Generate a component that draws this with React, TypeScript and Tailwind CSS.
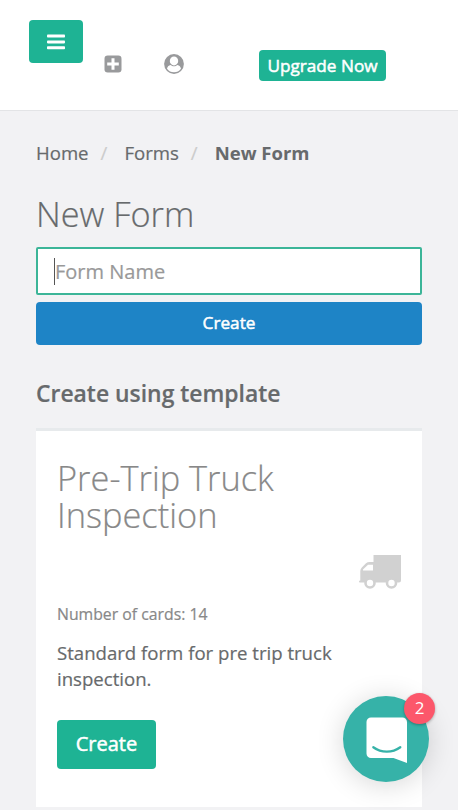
function BarsIcon() {
  return (
    <svg width="18" height="16" viewBox="0 0 18 16" fill="white">
      <rect x="0" y="0.5" width="18" height="3" rx="0.8" />
      <rect x="0" y="6.4" width="18" height="3" rx="0.8" />
      <rect x="0" y="12.3" width="18" height="3" rx="0.8" />
    </svg>
  );
}

function PlusSquareIcon() {
  return (
    <svg width="18" height="18" viewBox="0 0 18 18">
      <rect x="0.5" y="0.5" width="17" height="17" rx="3.2" fill="#999a9c" />
      <path d="M7.5 3.2h3v4.300h4.300v3h-4.300v4.300h-3v-4.300H3.200v-3h4.300z" fill="white" />
    </svg>
  );
}

function UserCircleIcon() {
  return (
    <svg width="20" height="20" viewBox="0 0 20 20">
      <circle cx="10" cy="10" r="9.9" fill="#999a9c" />
      <path
        d="M6.7 10.9C4.5 11.2 3.3 12.7 3 14.7c1.6 2.3 4.1 3.6 7 3.6s5.4-1.3 7-3.600c-.3-2-1.500-3.500-3.700-3.800-.9.900-2 1.400-3.300 1.400s-2.400-.5-3.300-1.400z"
        fill="white"
      />
      <ellipse cx="10" cy="6.9" rx="4.2" ry="4.5" fill="white" />
    </svg>
  );
}

function TruckIcon() {
  return (
    <svg width="42" height="34" viewBox="0 0 42 34">
      <path
        d="M14.5 0H42V25.500Q42 27.500 40 27.500H0.800Q0 27.500 0 26.500T1.300 25.500V16Q1.300 14 2.800 12.500L7 8.300Q8.500 7 10.500 7H14.500z"
        fill="#d1d1d1"
      />
      <path d="M4 15.500v-1L9 9.700h5v5.800z" fill="white" />
      <circle cx="11" cy="28" r="4.500" fill="white" stroke="#d1d1d1" strokeWidth="2.600" />
      <circle cx="32.500" cy="28" r="4.500" fill="white" stroke="#d1d1d1" strokeWidth="2.600" />
    </svg>
  );
}

function ChatIcon() {
  return (
    <svg width="42" height="47" viewBox="0 0 42 47" fill="none">
      <path
        d="M5 .5h31.500a4.500 4.500 0 0 1 4.500 4.500v41L27.500 41H5A4.500 4.500 0 0 1 .5 36.500V5A4.500 4.500 0 0 1 5 .5z"
        fill="white"
      />
      <path d="M7.300 30.200c8 5.900 19 5.900 27 0" stroke="#36b2a8" strokeWidth="2.300" strokeLinecap="round" />
    </svg>
  );
}

export default function App() {
  return (
    <div className="relative h-[810px] w-full overflow-hidden bg-[#f2f2f4] font-['Open_Sans',sans-serif] text-[18.6px] text-[#676a6c] [-webkit-text-stroke:0.2px]">
      <header className="flex h-[111px] items-start border-b border-[#e3e4e6] bg-white pl-[29px]">
        <button className="mt-5 flex h-[43px] w-[54px] items-center justify-center rounded bg-[#1eb394]" aria-label="Menu">
          <BarsIcon />
        </button>
        <div className="mt-[55px] ml-[21px]">
          <PlusSquareIcon />
        </div>
        <div className="mt-[54px] ml-[42px]">
          <UserCircleIcon />
        </div>
        <button className="mt-[50px] ml-[75px] flex h-[31px] w-[127px] items-center justify-center rounded bg-[#1eb394] text-[17.2px] whitespace-nowrap text-white [-webkit-text-stroke:0.5px]">
          Upgrade Now
        </button>
      </header>

      <main className="px-9">
        <nav className="mt-[29px] flex h-[26px] items-center whitespace-nowrap">
          <span>Home</span>
          <span className="ml-3 text-[#cccccc]">/</span>
          <span className="ml-[17px]">Forms</span>
          <span className="ml-3 text-[#cccccc]">/</span>
          <span className="ml-[17px] text-[18.5px] font-bold [-webkit-text-stroke:0px]">New Form</span>
        </nav>
        <h1 className="mt-[28px] text-[34.3px] leading-[40px] font-light">New Form</h1>
        <div className="mt-[13px] flex h-[48px] items-center rounded-[2px] border-2 border-[#3cb598] bg-white pt-px pl-4">
          <span className="h-[27px] w-px bg-[#555555]" />
          <span className="text-[20px] text-[#999999]">Form Name</span>
        </div>
        <button className="mt-[7px] flex h-[43px] w-full items-center justify-center rounded bg-[#1e84c6] pb-[2px] text-[17.2px] text-white [-webkit-text-stroke:0.5px]">
          Create
        </button>
        <h2 className="mt-[33px] text-[22.9px] leading-[32px] font-semibold">Create using template</h2>

        <section className="mt-[18px] h-[379px] border-t-[3px] border-[#e7eaec] bg-white px-[21px] pt-[28px]">
          <h3 className="text-[34.4px] leading-[37px] font-light text-[#888888]">Pre-Trip Truck Inspection</h3>
          <div className="mt-[22px] flex justify-end">
            <TruckIcon />
          </div>
          <p className="mt-[13px] text-[15.8px] leading-[24px] text-[#888888]">Number of cards: 14</p>
          <p className="mt-[14px] text-[18.6px] leading-[26px]">Standard form for pre trip truck inspection.</p>
          <button className="mt-[28px] flex h-[49px] w-[99px] items-center justify-center rounded bg-[#1eb394] pb-[2px] text-[20px] text-white [-webkit-text-stroke:0.5px]">
            Create
          </button>
        </section>
      </main>

      <button
        className="absolute top-[696px] left-[343px] flex h-[86px] w-[86px] items-center justify-center rounded-full bg-[#36b2a8] pt-[2px] pl-px shadow-[0_3px_28px_rgba(0,0,0,0.16)]"
        aria-label="Chat"
      >
        <ChatIcon />
        <span className="absolute top-[-3px] left-[61px] flex h-[31px] w-[31px] items-center justify-center rounded-full bg-[#fc576b] pb-[2px] text-[17px] leading-none text-white shadow-[0_1px_3px_rgba(0,0,0,0.3)] [-webkit-text-stroke:0px]">
          2
        </span>
      </button>
    </div>
  );
}
